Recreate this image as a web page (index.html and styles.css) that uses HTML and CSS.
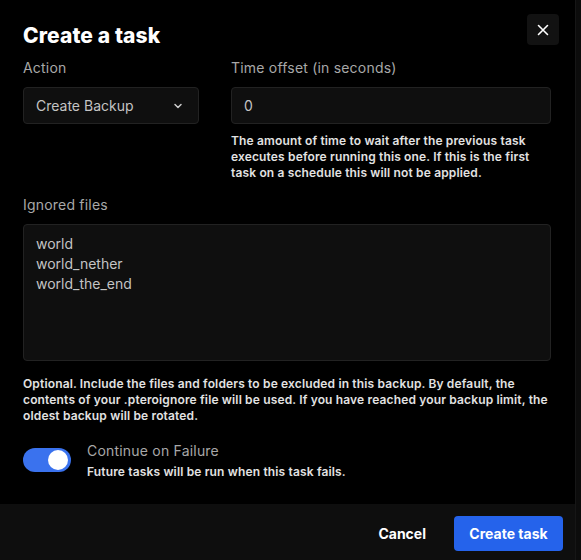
FILE: index.html
```html
<!DOCTYPE html>
<html lang="en">
<head>
    <meta charset="UTF-8">
    <meta name="viewport" content="width=device-width, initial-scale=1.0">
    <title>Create a task</title>
    <link rel="stylesheet" href="styles.css">
</head>
<body>
    <div class="modal">
        <div class="modal-body">
            <button class="close-btn" aria-label="Close">
                <svg width="12" height="12" viewBox="0 0 12 12"><path d="M1.5 1.5l9 9M10.5 1.5l-9 9" stroke="#fff" stroke-width="1.6" stroke-linecap="round"/></svg>
            </button>
            <h1 class="title">Create a task</h1>

            <div class="row">
                <div class="field field-action">
                    <label class="label">Action</label>
                    <div class="select">
                        <span>Create Backup</span>
                        <svg width="10" height="10" viewBox="0 0 10 10"><path d="M2 3.5l3 3 3-3" fill="none" stroke="#ccc" stroke-width="1.5" stroke-linecap="round" stroke-linejoin="round"/></svg>
                    </div>
                </div>
                <div class="field field-offset">
                    <label class="label">Time offset (in seconds)</label>
                    <div class="input">0</div>
                    <p class="help">The amount of time to wait after the previous task executes before running this one. If this is the first task on a schedule this will not be applied.</p>
                </div>
            </div>

            <div class="field field-ignored">
                <label class="label">Ignored files</label>
                <div class="textarea">world<br>world_nether<br>world_the_end</div>
                <p class="help">Optional. Include the files and folders to be excluded in this backup. By default, the contents of your .pteroignore file will be used. If you have reached your backup limit, the oldest backup will be rotated.</p>
            </div>

            <div class="toggle-row">
                <div class="toggle"><span class="knob"></span></div>
                <div class="toggle-text">
                    <p class="toggle-title">Continue on Failure</p>
                    <p class="toggle-desc">Future tasks will be run when this task fails.</p>
                </div>
            </div>
        </div>
        <div class="modal-footer">
            <button class="btn btn-cancel">Cancel</button>
            <button class="btn btn-primary">Create task</button>
        </div>
    </div>
    <div class="scroll-strip"></div>
</body>
</html>
```

FILE: styles.css
```css
* {
    box-sizing: border-box;
    margin: 0;
    padding: 0;
}
body {
    font-family: 'Inter', 'Liberation Sans', sans-serif;
    background-color: #000;
    color: #e5e5e5;
    width: 581px;
    height: 560px;
    display: flex;
    overflow: hidden;
}

.modal {
    width: 575px;
    height: 560px;
    display: flex;
    flex-direction: column;
    background-color: #000;
}
.modal-body {
    position: relative;
    flex: 1;
    padding: 23px 24px 0 23px;
}
.scroll-strip {
    width: 6px;
    background-color: #0c0c0c;
    border-left: 1px solid #161616;
}

.close-btn {
    position: absolute;
    top: 14px;
    right: 16px;
    width: 32px;
    height: 31px;
    border: none;
    border-radius: 4px;
    background-color: #121212;
    display: flex;
    align-items: center;
    justify-content: center;
}

.title {
    font-size: 21px;
    font-weight: 800;
    color: #fff;
    letter-spacing: 0.1px;
    line-height: 26px;
}

.row {
    display: flex;
    gap: 32px;
    margin-top: 10px;
}
.field-action {
    width: 176px;
}
.field-offset {
    flex: 1;
}
.label {
    display: block;
    font-size: 14px;
    color: #a8a8a8;
    letter-spacing: 0.2px;
    line-height: 18px;
    margin-bottom: 10px;
}
.select, .input, .textarea {
    background-color: #0f0f0f;
    border: 1px solid #222;
    border-radius: 4px;
    font-size: 14px;
    color: #c4c4c4;
}
.select, .input {
    height: 37px;
    display: flex;
    align-items: center;
    padding: 0 12px;
}
.select {
    justify-content: space-between;
    padding-right: 15px;
}
.help {
    font-size: 12px;
    font-weight: 600;
    letter-spacing: 0.15px;
    line-height: 16px;
    color: #e2e2e2;
    margin-top: 9px;
}

.field-ignored {
    margin-top: 15px;
}
.textarea {
    height: 137px;
    padding: 9px 12px;
    line-height: 20px;
}
.field-ignored .help {
    margin-top: 15px;
}

.toggle-row {
    display: flex;
    gap: 16px;
    margin-top: 18px;
}
.toggle {
    width: 48px;
    height: 24px;
    border-radius: 12px;
    background-color: #3a72ee;
    margin-top: 6px;
    position: relative;
}
.knob {
    position: absolute;
    top: 2px;
    right: 3px;
    width: 20px;
    height: 20px;
    border-radius: 50%;
    background-color: #fff;
}
.toggle-title {
    font-size: 14px;
    color: #a8a8a8;
    letter-spacing: 0.2px;
    line-height: 18px;
}
.toggle-desc {
    font-size: 12px;
    font-weight: 600;
    letter-spacing: 0.15px;
    color: #e2e2e2;
    margin-top: 4px;
    line-height: 16px;
}

.modal-footer {
    height: 56px;
    background-color: #0e0e0e;
    display: flex;
    justify-content: flex-end;
    align-items: flex-start;
    gap: 10px;
    padding: 12px 12px 0 0;
}
.btn {
    font-family: inherit;
    font-size: 14px;
    font-weight: 700;
    border: none;
    border-radius: 4px;
    height: 35px;
    cursor: pointer;
}
.btn-cancel {
    background: none;
    color: #fff;
    padding: 0 18px;
}
.btn-primary {
    background-color: #2563eb;
    color: #fff;
    padding: 0 15px;
    width: 109px;
}
```
